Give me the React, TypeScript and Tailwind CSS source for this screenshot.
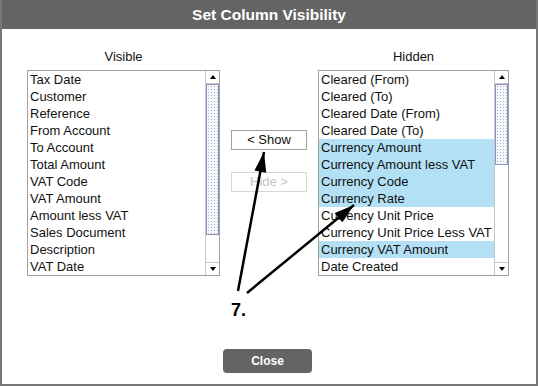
import React from "react";

const visible = [
  "Tax Date",
  "Customer",
  "Reference",
  "From Account",
  "To Account",
  "Total Amount",
  "VAT Code",
  "VAT Amount",
  "Amount less VAT",
  "Sales Document",
  "Description",
  "VAT Date",
];

const hidden = [
  "Cleared (From)",
  "Cleared (To)",
  "Cleared Date (From)",
  "Cleared Date (To)",
  "Currency Amount",
  "Currency Amount less VAT",
  "Currency Code",
  "Currency Rate",
  "Currency Unit Price",
  "Currency Unit Price Less VAT",
  "Currency VAT Amount",
  "Date Created",
];

const selectedHidden = new Set([4, 5, 6, 7, 10]);

function ScrollBar({ thumb }: { thumb: "long" | "short" }) {
  return (
    <div className="w-[14px] flex flex-col border-l border-[#c8c8c8] bg-white">
      <div className="h-[13px] border-b border-[#c8c8c8] flex items-center justify-center">
        <div className="w-0 h-0 border-x-[3.5px] border-x-transparent border-b-[4px] border-b-black" />
      </div>
      <div
        className={
          (thumb === "long" ? "h-[151px]" : "h-[81px]") +
          " border border-[#8c92c4] bg-[#f7f8fb] bg-[image:radial-gradient(circle,#a3afc8_0.6px,transparent_0.8px)] bg-[length:3px_3px]"
        }
      />
      <div className="flex-1" />
      <div className="h-[13px] border-t border-[#c8c8c8] flex items-center justify-center">
        <div className="w-0 h-0 border-x-[3.5px] border-x-transparent border-t-[4px] border-t-black" />
      </div>
    </div>
  );
}

function ListBox({
  items,
  selected,
  widthClass,
  thumb,
}: {
  items: string[];
  selected?: Set<number>;
  widthClass: string;
  thumb: "long" | "short";
}) {
  return (
    <div className={widthClass + " h-[206px] border border-[#a0a0a0] flex bg-white"}>
      <div className="flex-1 overflow-hidden">
        {items.map((it, i) => (
          <div
            key={it}
            className={
              "h-[17px] leading-[17px] pl-[2px] text-[13px] text-[#111] whitespace-nowrap " +
              (selected && selected.has(i) ? "bg-[#b3e0f5]" : "")
            }
          >
            {it}
          </div>
        ))}
      </div>
      <ScrollBar thumb={thumb} />
    </div>
  );
}

function arrowHead(tx: number, ty: number, fx: number, fy: number, len = 20, half = 6) {
  const dx = tx - fx;
  const dy = ty - fy;
  const l = Math.sqrt(dx * dx + dy * dy);
  const ux = dx / l;
  const uy = dy / l;
  const bx = tx - ux * len;
  const by = ty - uy * len;
  const px = -uy;
  const py = ux;
  return `${tx},${ty} ${bx + px * half},${by + py * half} ${bx - px * half},${by - py * half}`;
}

export default function App() {
  const a1 = { fx: 238, fy: 291, tx: 264, ty: 152 };
  const a2 = { fx: 247, fy: 293, tx: 354, ty: 205 };
  return (
    <div className="relative w-[538px] h-[386px] font-['Liberation_Sans',Arial,sans-serif]">
      <div className="w-full h-full bg-white border-x-2 border-b-2 border-[#777777] flex flex-col">
        <div className="h-[29px] bg-[#646464] text-white font-bold text-[15.5px] flex items-center justify-center">
          Set Column Visibility
        </div>
        <div className="pt-[20px] flex pl-[25px] text-[13px] leading-[16px] text-[#111]">
          <div className="w-[193px] text-center">Visible</div>
          <div className="w-[98px]" />
          <div className="w-[191px] text-center">Hidden</div>
        </div>
        <div className="mt-[5px] flex pl-[25px]">
          <ListBox items={visible} widthClass="w-[193px]" thumb="long" />
          <div className="w-[98px] flex flex-col items-center pt-[60px]">
            <div className="w-[76px] h-[20px] border border-[#a0a0a0] bg-white text-[13px] text-[#111] flex items-center justify-center">
              &lt; Show
            </div>
            <div className="mt-[22px] w-[76px] h-[20px] border border-[#d6d6d6] bg-white text-[13px] text-[#c4c4c4] flex items-center justify-center">
              Hide &gt;
            </div>
          </div>
          <ListBox items={hidden} selected={selectedHidden} widthClass="w-[191px]" thumb="short" />
        </div>
        <div className="mt-[73px] flex pl-[221px]">
          <div className="w-[89px] h-[24px] rounded-[4px] bg-[#646464] text-white font-bold text-[12px] flex items-center justify-center">
            Close
          </div>
        </div>
      </div>
      <svg className="absolute inset-0 pointer-events-none" width="538" height="386">
        <line x1={a1.fx} y1={a1.fy} x2={a1.tx} y2={a1.ty} stroke="#000" strokeWidth="2.5" />
        <polygon points={arrowHead(a1.tx, a1.ty, a1.fx, a1.fy)} fill="#000" />
        <line x1={a2.fx} y1={a2.fy} x2={a2.tx} y2={a2.ty} stroke="#000" strokeWidth="2.5" />
        <polygon points={arrowHead(a2.tx, a2.ty, a2.fx, a2.fy)} fill="#000" />
      </svg>
      <div className="absolute left-[231px] top-[301px] text-[18px] leading-[18px] font-bold text-black">7.</div>
    </div>
  );
}
